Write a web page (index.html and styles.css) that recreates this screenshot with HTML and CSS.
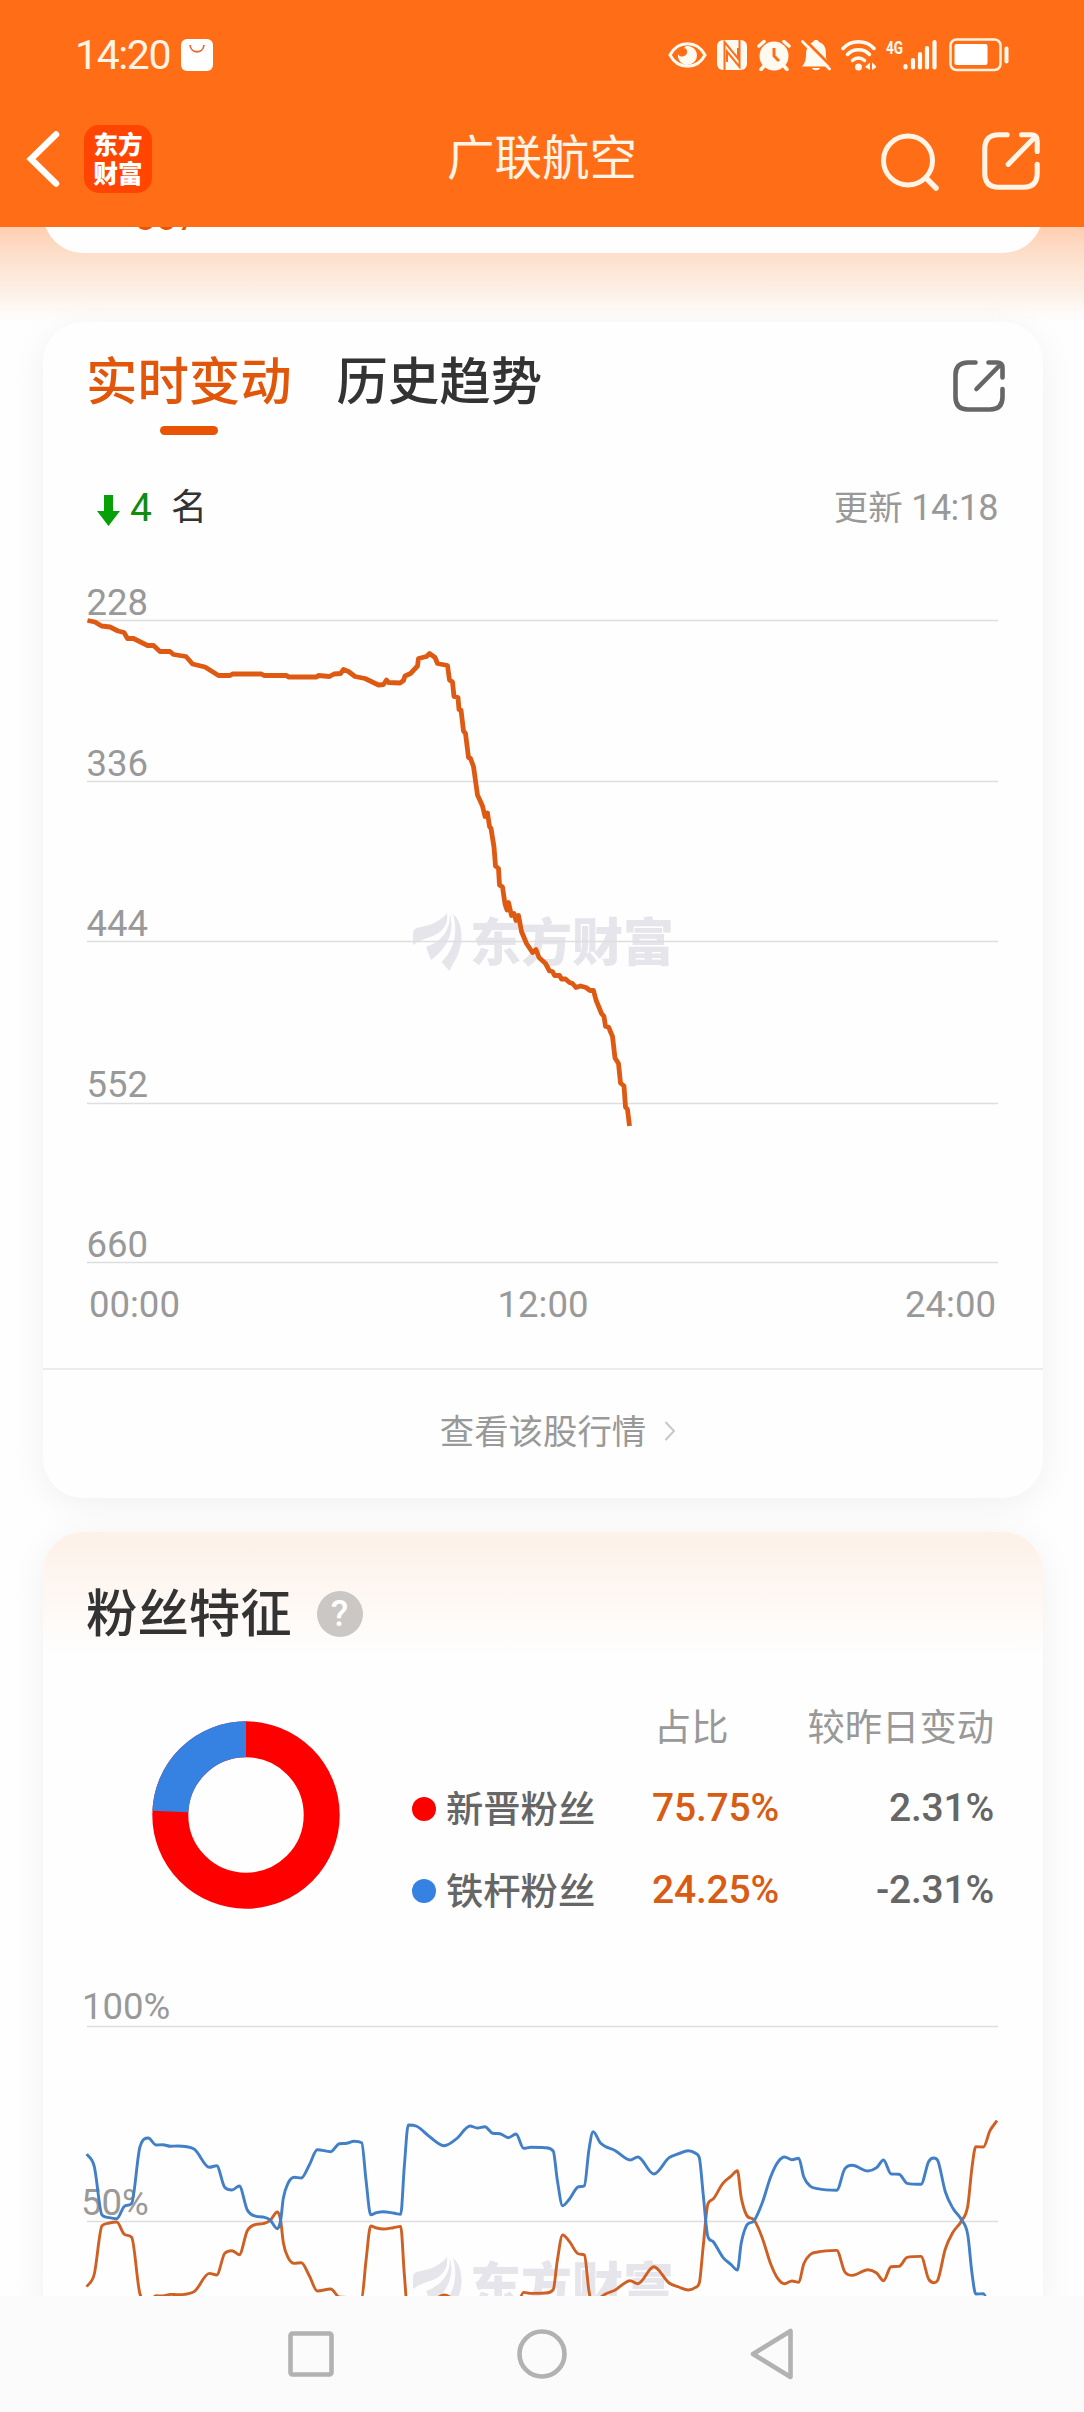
FILE: index.html
```html
<!DOCTYPE html>
<html lang="zh-CN">

<head>
    <meta charset="UTF-8">
    <meta name="viewport" content="width=device-width, initial-scale=1.0">
    <title>广联航空</title>
    <link rel="stylesheet" href="styles.css">
</head>

<body>
    <header class="header">
        <div class="status">
            <div class="status-left">
                <span class="clock">14:20</span>
                <svg width="32" height="32" viewBox="0 0 32 32">
                    <rect width="32" height="32" rx="6" fill="#fff" />
                    <path d="M9 6c1 9 13 9 14 0" fill="none" stroke="#e0703a" stroke-width="1.8" />
                </svg>
            </div>
            <div class="status-right">
                <!-- eye -->
                <svg width="39" height="32" viewBox="0 0 39 32">
                    <path d="M2 16C10 1 29 1 37 16C29 31 10 31 2 16Z" fill="none" stroke="#fffaf0" stroke-width="3" />
                    <path d="M18 7a9.5 9.5 0 1 1-8 8c2 4 8 3 9-1c.6-3-.6-4.5-3-5z" fill="#fffaf0" />
                </svg>
                <!-- nfc -->
                <svg width="30" height="32" viewBox="0 0 30 32">
                    <rect y="1" width="30" height="30" rx="6" fill="#fffaf0" />
                    <path d="M7.5 31V3L21 19.500V9M22.500 1V28L10 12.500V23" fill="none" stroke="#ff6e17" stroke-width="2" />
                </svg>
                <!-- alarm -->
                <svg width="34" height="32" viewBox="0 0 34 32">
                    <circle cx="17" cy="17" r="14.500" fill="#fffaf0" />
                    <path d="M2 7L7 2.500M32 7L27 2.500M7 27L4 30.500M27 27L30 30.500" stroke="#fffaf0" stroke-width="3.500" stroke-linecap="round" />
                    <path d="M17 9V17L22 22" fill="none" stroke="#ff6e17" stroke-width="3" />
                </svg>
                <!-- muted bell -->
                <svg width="30" height="32" viewBox="0 0 30 32">
                    <path d="M1 27.500C5 23 5 19 5 14C6 7 9 4 12 3C13.500 0 16.500 0 18 3C24 5 25 10 25 15V19L29 27.500Z" fill="#fffaf0" />
                    <path d="M11 29h8c-1 3-7 3-8 0z" fill="#fffaf0" />
                    <path d="M3 0L32 29" stroke="#ff6e17" stroke-width="3" />
                    <path d="M1.500 2.500L28.500 30" stroke="#fffaf0" stroke-width="2.800" stroke-linecap="round" />
                </svg>
                <!-- wifi -->
                <svg width="35" height="32" viewBox="0 0 35 32">
                    <g fill="none" stroke="#fffaf0" stroke-width="3.500" stroke-linecap="round">
                        <path d="M2 9.500C10 .5 25 .5 33 9.500" />
                        <path d="M6.500 15.500C12 9 23 9 28.500 15.500" />
                        <path d="M11.500 21.500C15 18 20 18 23.500 21.500" />
                    </g>
                    <circle cx="17.500" cy="28" r="3.500" fill="#fffaf0" />
                    <path d="M24 28L29 23.500V31ZM36 28L31 23.500V31Z" fill="#fffaf0" />
                </svg>
                <!-- signal -->
                <svg width="53" height="38" viewBox="0 -3 53 38">
                    <text x="0" y="14.500" class="net" textLength="17" lengthAdjust="spacingAndGlyphs">4G</text>
                    <path d="M19.500 27v1.500M27 21v7.500M34 15v13.500M41 9v19.500M48.500 3v25.500" stroke="#fffaf0" stroke-width="4.200" stroke-linecap="round" />
                </svg>
                <!-- battery -->
                <svg width="60" height="34" viewBox="0 0 60 34">
                    <rect x="1.500" y="1.500" width="50" height="30.500" rx="6" fill="none" stroke="#fff3e0" stroke-width="2.500" />
                    <rect x="5.500" y="6" width="33" height="21" rx="2" fill="#fff" />
                    <rect x="55.500" y="8.500" width="4" height="17" rx="2" fill="#fffaf0" />
                </svg>
            </div>
        </div>
        <div class="titlebar">
            <div class="titlebar-left">
                <svg class="back" width="36" height="60" viewBox="0 0 36 60">
                    <path d="M31 5.500L6 30L31 54.500" fill="none" stroke="#fff" stroke-width="6.500" stroke-linecap="round" />
                </svg>
                <div class="logo">东方<br>财富</div>
            </div>
            <h1 class="title">广联航空</h1>
            <div class="titlebar-right">
                <svg width="60" height="60" viewBox="0 0 60 60">
                    <g fill="none" stroke="#fff4e6" stroke-width="5">
                        <circle cx="28" cy="29.500" r="24.500" />
                        <path d="M46 47L56 57" stroke-width="5.500" stroke-linecap="round" />
                    </g>
                </svg>
                <svg class="share" width="58" height="58" viewBox="0 0 52 52">
                    <use href="#share" />
                </svg>
            </div>
        </div>
    </header>

    <main class="content">
        <div class="card rank-card">567</div>

        <section class="card">
            <div class="tabs">
                <div class="tab active"><span>实时变动</span></div>
                <div class="tab"><span>历史趋势</span></div>
                <svg class="share" width="52" height="52" viewBox="0 0 52 52">
                    <symbol id="share" viewBox="0 0 52 52">
                        <g fill="none" stroke="currentColor" stroke-width="4.600" stroke-linecap="round" stroke-linejoin="round">
                            <path d="M22.500 2.500H15Q2.500 2.500 2.500 15V37Q2.500 49.500 15 49.500H37Q49.500 49.500 49.500 37V29" />
                            <path d="M35.500 2.500H44Q49.500 2.500 49.500 8V17.500M47.500 4.500L23.500 29" />
                        </g>
                    </symbol>
                    <use href="#share" />
                </svg>
            </div>
            <div class="change">
                <svg width="23" height="31" viewBox="0 0 23 31">
                    <path d="M7 0H16V16H23L11.500 31L0 16H7Z" fill="#08a008" />
                </svg>
                <span class="change-num">4</span>
                <span class="change-unit">名</span>
                <span class="updated">更新 <b>14:18</b></span>
            </div>
            <svg class="chart" width="1000" height="841" viewBox="43 527 1000 841">
                <g class="watermark" transform="translate(413 912)">
                    <g id="leaf">
                        <path d="M0 20C1 16 4 16 8 15C20 13 28 8 34 1C36 14 27 22 17 25C10 27 4 30 0 33Z" />
                        <path d="M37 2C42 22 33 37 18 48L13 35C29 29 37 19 37 2Z" />
                        <path d="M40 2C49 9 50 25 47 36C45 45 40 51 36.500 59L28.500 50C42 37 45 19 40 2Z" />
                    </g>
                    <text x="57" y="49">东方财富</text>
                </g>
                <path class="grid-line" d="M87 620.500H998M87 781.500H998M87 941.500H998M87 1103.500H998M87 1262.500H998" />
                <g class="axis">
                    <text x="86.500" y="615">228</text>
                    <text x="86.500" y="775.500">336</text>
                    <text x="86.500" y="935.500">444</text>
                    <text x="86.500" y="1096.500">552</text>
                    <text x="86.500" y="1257">660</text>
                    <text x="89" y="1317">00:00</text>
                    <text x="543" y="1317" text-anchor="middle">12:00</text>
                    <text x="996" y="1317" text-anchor="end">24:00</text>
                </g>
                <polyline class="rank-line" points="87.5,620.5 95,622 101.5,626 110,627 118,631 124,632.5 127.5,638.5 133.5,638.5 147.5,645.5 153.5,645.5 160,651.5 170,651.5 173.5,654.5 186,656.5 192.5,664 205,667 218.5,675.5 230,675.5 232.5,674 261.5,674 264,675.5 286.5,675.5 288.5,677 316.5,677 318.5,675.5 329.5,676.5 334,674 340.5,673.5 343.5,669.5 348.5,671.5 355,676.5 365,678.5 378.5,685 383.5,684.5 386.5,680 388.5,682.5 400,683 403.5,680.5 405,676 410.5,673.5 417.5,666 418.5,658.5 426.5,656.5 429.5,653.5 435,657.5 437.5,663.5 447.5,665.5 449.5,680 452.5,682 454,696.5 458,697.5 459,709.5 461,710 463.5,731 465.5,733.5 468.5,757.5 470.5,758.5 473.5,766.5 477.5,795 482.5,806 485,816.5 487.5,813 489.5,826.5 491,828.5 494,847 495.5,866 498.5,868.5 499.5,885 502.5,887 505,904 507,910 508.5,902.5 511.5,915.5 514,913.5 516,920.5 518.5,915.5 521.5,931.5 526.5,943.5 532.5,952.5 536,949.5 539,957.5 545.5,963.5 549.5,971 552.5,971.5 554.5,975.5 559.5,975.5 561.5,979 565.5,979 569.5,982.5 572.5,983.5 576,987.5 580.5,986 586,987.5 590,990.5 593.5,990.5 596,1000 601.5,1013.5 604,1016.5 605.5,1026.5 608.5,1027 612.5,1036.5 615,1058 618.5,1063.5 620.5,1083 624,1086 625.5,1107 627.5,1109.5 629.5,1126" />
            </svg>
            <a class="more">查看该股行情
                <svg width="12" height="20" viewBox="0 0 12 20">
                    <path d="M1.500 1L10 10L1.500 19" fill="none" stroke="#c8c8c8" stroke-width="2" />
                </svg>
            </a>
        </section>

        <section class="card fans">
            <div class="fans-head">
                <h2>粉丝特征</h2>
                <span class="help">?</span>
            </div>
            <div class="fans-body">
                <svg class="donut" width="188" height="188" viewBox="-94 -94 188 188">
                    <g fill="none" stroke-width="36" transform="rotate(-90)">
                        <circle r="75.700" stroke="#ff0000" />
                        <circle r="75.700" stroke="#3582e2" pathLength="100" stroke-dasharray="0 75.750 24.250 0" />
                    </g>
                </svg>
                <div class="legend">
                    <span></span>
                    <span class="th th-rate">占比</span>
                    <span class="th right">较昨日变动</span>
                    <span class="name"><i class="dot red"></i>新晋粉丝</span>
                    <span class="rate">75.75%</span>
                    <span class="diff">2.31%</span>
                    <span class="name"><i class="dot blue"></i>铁杆粉丝</span>
                    <span class="rate">24.25%</span>
                    <span class="diff">-2.31%</span>
                </div>
            </div>
            <svg class="chart" width="1000" height="400" viewBox="43 1930 1000 400">
                <g class="watermark" transform="translate(413 2256)">
                    <use href="#leaf" />
                    <text x="57" y="49">东方财富</text>
                </g>
                <path class="grid-line" d="M87 2026.500H998M87 2221.500H998" />
                <g class="axis">
                    <text x="82" y="2019">100%</text>
                    <text x="81" y="2215">50%</text>
                </g>
                <path id="newFans" class="fans-line orange" />
                <path id="oldFans" class="fans-line blue-line" />
            </svg>
        </section>
    </main>

    <nav class="navbar">
        <svg width="46" height="52" viewBox="0 0 46 52">
            <rect x="2.500" y="5.500" width="41" height="41" rx="2" />
        </svg>
        <svg width="52" height="52" viewBox="0 0 52 52">
            <circle cx="26" cy="26" r="22.500" />
        </svg>
        <svg width="46" height="52" viewBox="0 0 46 52">
            <path d="M40.500 3V49L3 26Z" stroke-linejoin="round" />
        </svg>
    </nav>

    <script>
        const points = [
            [86.7, 2154], [94.3, 2166.7], [102, 2215], [109.3, 2217.7], [116.7, 2218.7], [124, 2206.7], [131.7, 2203.3],
            [140, 2146.7], [148.3, 2138], [156, 2145], [162.7, 2144.7], [170.7, 2146.3], [177.3, 2146], [194, 2149],
            [209.3, 2167.3], [216.7, 2165.7], [224.7, 2187.3], [232, 2190], [239.3, 2186], [247.3, 2210], [256, 2216.3],
            [262.7, 2217], [270, 2220], [277.3, 2228.7], [280.7, 2220], [283.3, 2198.3], [288, 2183.3], [294.3, 2177.3],
            [301.3, 2178], [309.3, 2165], [317.3, 2149.7], [330.7, 2151.7], [339.3, 2143.7], [346.7, 2143.3], [354, 2141.3],
            [361.7, 2142.7], [366, 2180], [370.7, 2214.7], [376.7, 2212.7], [383.3, 2211.7], [393.3, 2213], [400.7, 2214.3],
            [404.3, 2166.7], [408.3, 2125], [416.7, 2126.3], [430, 2137], [444.3, 2145.7], [456.7, 2138.7], [470, 2126],
            [477.3, 2128], [485, 2126.7], [492.7, 2133.3], [500, 2133.7], [508.3, 2137.7], [516, 2134], [523.7, 2148.3],
            [530.7, 2147.3], [545, 2147.7], [553.2, 2151], [557.3, 2180], [562.6, 2205.7], [569.5, 2199], [577.5, 2187.3],
            [584.4, 2185.7], [588.9, 2150], [593.1, 2131.7], [600.7, 2143.3], [615.3, 2150.7], [630.2, 2160], [637.8, 2157],
            [653.8, 2174], [669.1, 2157.7], [678.8, 2153.7], [688.2, 2150.7], [695.1, 2153], [699.3, 2157.7], [703.1, 2193.3],
            [707.9, 2236.7], [713.5, 2242], [722.9, 2257.3], [730.8, 2264.3], [737.4, 2270], [741.2, 2243.3], [746.5, 2225.7],
            [754.1, 2220.7], [762.1, 2203.3], [770.7, 2176.7], [777.7, 2162.3], [784.6, 2157], [791.9, 2159.7], [798.8, 2158.3],
            [803.7, 2176.7], [810, 2186], [817.6, 2188.7], [836.7, 2190.3], [844.7, 2169], [852.3, 2165.3], [867.9, 2171],
            [876.6, 2167.7], [883.5, 2160], [891.1, 2174], [899.1, 2174.3], [907.1, 2183.3], [921, 2184.3], [928.6, 2161.7],
            [933.8, 2158], [937.6, 2160.3], [945.3, 2191.7], [952.9, 2208.3], [961.6, 2220], [967.8, 2235], [972, 2273.3],
            [975.8, 2294], [983.4, 2293.7], [990, 2310], [997, 2320]
        ];

        // monotone smoothing, flat at local peaks
        function smoothPath(p) {
            const slope = i => (p[i + 1][1] - p[i][1]) / (p[i + 1][0] - p[i][0]);
            const tangent = p.map((_, i) => {
                if (i === 0) return slope(0);
                if (i === p.length - 1) return slope(i - 1);
                const a = slope(i - 1), b = slope(i);
                if (a * b <= 0) return 0;
                return Math.sign(a) * Math.min(3 * Math.abs(a), 3 * Math.abs(b), Math.abs(a + b) / 2);
            });
            let d = 'M' + p[0];
            for (let i = 1; i < p.length; i++) {
                const h = (p[i][0] - p[i - 1][0]) / 3;
                d += 'C' + [p[i - 1][0] + h, p[i - 1][1] + h * tangent[i - 1],
                    p[i][0] - h, p[i][1] - h * tangent[i], p[i][0], p[i][1]];
            }
            return d;
        }

        document.getElementById('oldFans').setAttribute('d', smoothPath(points));
        // the two shares always add up to 100%
        document.getElementById('newFans').setAttribute('d', smoothPath(points.map(([x, y]) => [x, 4440.7 - y])));
    </script>
</body>

</html>
```

FILE: styles.css
```css
* {
    box-sizing: border-box;
}

body {
    display: flex;
    flex-direction: column;
    width: 1084px;
    height: 2412px;
    margin: 0;
    overflow: hidden;
    background-color: #fefefe;
    color: #333;
    font-family: Roboto, "Noto Sans CJK SC", sans-serif;
}

svg {
    display: block;
    flex-shrink: 0;
}

h1,
h2 {
    margin: 0;
    font-weight: 400;
}

/* Header */
.header {
    flex: none;
    height: 227px;
    background-color: #ff6e17;
    color: #fff4e6;
}

.status {
    display: flex;
    justify-content: space-between;
    align-items: center;
    height: 109px;
    padding: 0 75px 0 75px;
}

.status-left,
.status-right {
    display: flex;
    align-items: center;
}

.status-left {
    gap: 11px;
}

.status-right {
    gap: 10px;
}

.clock {
    font-size: 41px;
    letter-spacing: -1.4px;
}

.net {
    fill: #fffaf0;
    font-size: 19px;
    font-weight: 700;
}

.titlebar {
    display: grid;
    grid-template-columns: 1fr auto 1fr;
    align-items: center;
    height: 100px;
}

.titlebar-left {
    display: flex;
    align-items: center;
    gap: 23px;
    padding-left: 25px;
}

.logo {
    width: 68px;
    height: 68px;
    padding-top: 6px;
    border-radius: 15px;
    background-color: #ff4500;
    color: #fff;
    font-size: 24.5px;
    font-weight: 900;
    line-height: 29px;
    text-align: center;
}

.title {
    font-size: 47.5px;
    line-height: 60px;
}

.titlebar-right {
    display: flex;
    justify-content: flex-end;
    align-items: center;
    gap: 42px;
    padding: 4px 44px 0 0;
}

/* Cards */
.content {
    flex: 1;
    min-height: 0;
    overflow: hidden;
    padding: 0 41px 0 43px;
    background: linear-gradient(#ffceb0 0, #fddfcb 27px, #fdeee3 62px, #fffaf7 84px, #fefefe 94px);
}

.card {
    width: 1000px;
    margin-bottom: 34px;
    border-radius: 40px;
    background-color: #fefefe;
    box-shadow: 0 6px 36px rgba(0, 0, 0, 0.06);
}

.rank-card {
    height: 126px;
    margin-top: -100px;
    margin-bottom: 69px;
    padding: 71px 0 0 91px;
    box-shadow: none;
    color: #e2560a;
    font-size: 38px;
    line-height: 38px;
}

.tabs {
    display: flex;
    align-items: flex-start;
    gap: 45px;
    padding: 31px 38px 0 43px;
    font-size: 51.4px;
    font-weight: 500;
    line-height: 60px;
}

.tab.active {
    color: #e2560a;
}

.tab.active::after {
    content: "";
    display: block;
    width: 58px;
    height: 9px;
    margin: 13px auto 0;
    border-radius: 5px;
    background-color: #e65404;
}

.tabs .share {
    margin: 7px 0 0 auto;
    color: #666;
}

.change {
    display: flex;
    align-items: center;
    height: 40px;
    margin-top: 53px;
    padding: 0 45px 0 54px;
    font-size: 36px;
    line-height: 40px;
}

.change svg {
    margin-top: 5px;
}

.change-num {
    margin-left: 10px;
    color: #108c10;
    font-size: 39px;
}

.change-unit {
    margin-left: 19px;
}

.updated {
    margin-left: auto;
    color: #999;
    font-size: 34.5px;
}

.updated b {
    font-size: 36px;
    font-weight: 400;
    letter-spacing: -0.6px;
}

/* Charts */
.chart {
    margin-top: -1px;
}

.grid-line {
    stroke: #dedede;
    stroke-width: 1.6;
}

.axis {
    fill: #999;
    font-size: 36.5px;
}

.watermark {
    fill: #e6e5eb;
    font-family: "Noto Sans CJK SC", sans-serif;
    font-size: 51px;
    font-weight: 900;
}

.rank-line {
    fill: none;
    stroke: #de5a12;
    stroke-width: 4.8;
    stroke-linejoin: round;
}

.fans-line {
    fill: none;
    stroke-width: 2.9;
    stroke-linejoin: round;
}

.orange {
    stroke: #cf6024;
}

.blue-line {
    stroke: #417fc6;
}

.more {
    display: flex;
    justify-content: center;
    align-items: center;
    gap: 18px;
    height: 130px;
    padding: 0 0 11px 30px;
    border-top: 2px solid #ececec;
    color: #999;
    font-size: 34.4px;
}

.more svg {
    margin-top: 5px;
}

/* Fans */
.fans {
    padding-top: 40px;
    background: linear-gradient(#fdf1e8 0, #fefefe 125px);
}

.fans-head {
    display: flex;
    align-items: center;
    gap: 25px;
    height: 80px;
    padding-left: 43px;
}

.fans-head h2 {
    margin-top: -6px;
    font-size: 51.4px;
    font-weight: 500;
}

.help {
    width: 46px;
    height: 46px;
    margin-top: 4px;
    border-radius: 50%;
    background-color: #cbc7c4;
    color: #fff;
    font-size: 36px;
    font-weight: 500;
    line-height: 47px;
    text-align: center;
}

.fans-body {
    display: flex;
    margin-top: 34px;
    padding-left: 109px;
}

.donut {
    margin-top: 35px;
}

.legend {
    display: grid;
    grid-template-columns: 240px 130px 1fr;
    grid-template-rows: 81px 82px 82px;
    align-items: center;
    width: 582px;
    height: 245px;
    margin-left: 72px;
    color: #666;
    font-size: 37.3px;
    font-weight: 500;
}

.th {
    margin-top: -4px;
    color: #999;
    font-weight: 400;
}

.th-rate {
    padding-left: 2px;
}

.right,
.diff {
    text-align: right;
}

.name {
    display: flex;
    align-items: center;
    gap: 10px;
    margin-top: -3px;
}

.dot {
    width: 24px;
    height: 24px;
    margin-top: 5px;
    border-radius: 50%;
}

.red {
    background-color: #ff0000;
}

.blue {
    background-color: #3582e2;
}

.rate {
    color: #d85c14;
}

.rate,
.diff {
    font-size: 39px;
    letter-spacing: -0.2px;
}

/* Bottom navigation */
.navbar {
    display: flex;
    flex: none;
    justify-content: center;
    gap: 182px;
    height: 116px;
    padding-top: 32px;
    background-color: #fbfbfb;
}

.navbar svg {
    fill: none;
    stroke: #b2b2b2;
    stroke-width: 4.6;
}
```
